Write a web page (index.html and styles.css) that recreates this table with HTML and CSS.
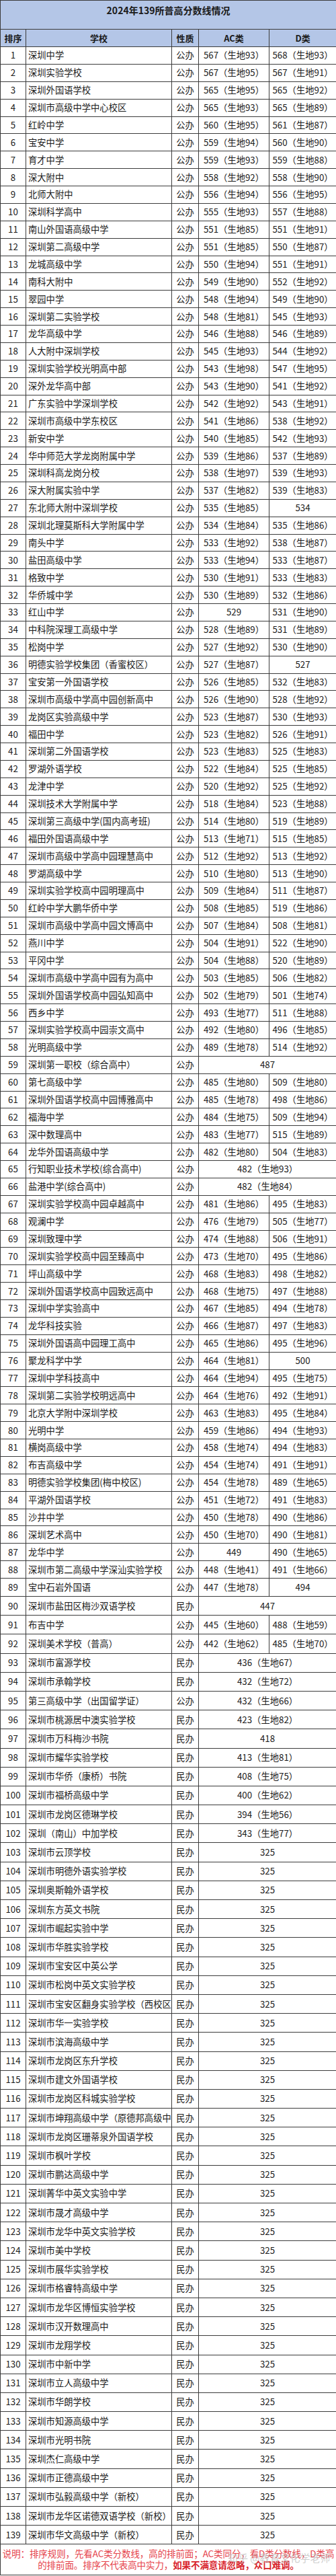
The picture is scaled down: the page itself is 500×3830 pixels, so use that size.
FILE: index.html
```html
<!DOCTYPE html>
<html lang="zh-CN">
<head>
<meta charset="utf-8">
<title>2024年139所普高分数线情况</title>
<link rel="stylesheet" href="styles.css">
</head>
<body>
<table class="scores">
<colgroup><col class="c-rank"><col class="c-name"><col class="c-type"><col class="c-ac"><col class="c-d"></colgroup>
<thead>
<tr class="title-row"><th colspan="5" class="title">2024年139所普高分数线情况</th></tr>
<tr class="head-row"><th>排序</th><th>学校</th><th>性质</th><th>AC类</th><th>D类</th></tr>
</thead>
<tbody class="short">
<tr><td>1</td><td class="name">深圳中学</td><td>公办</td><td>567（生地93）</td><td>568（生地93）</td></tr>
<tr><td>2</td><td class="name">深圳实验学校</td><td>公办</td><td>567（生地95）</td><td>567（生地91）</td></tr>
<tr><td>3</td><td class="name">深圳外国语学校</td><td>公办</td><td>565（生地95）</td><td>565（生地92）</td></tr>
<tr><td>4</td><td class="name">深圳市高级中学中心校区</td><td>公办</td><td>565（生地93）</td><td>565（生地89）</td></tr>
<tr><td>5</td><td class="name">红岭中学</td><td>公办</td><td>560（生地95）</td><td>561（生地87）</td></tr>
<tr><td>6</td><td class="name">宝安中学</td><td>公办</td><td>559（生地94）</td><td>560（生地90）</td></tr>
<tr><td>7</td><td class="name">育才中学</td><td>公办</td><td>559（生地93）</td><td>559（生地88）</td></tr>
<tr><td>8</td><td class="name">深大附中</td><td>公办</td><td>558（生地92）</td><td>558（生地90）</td></tr>
<tr><td>9</td><td class="name">北师大附中</td><td>公办</td><td>556（生地94）</td><td>556（生地95）</td></tr>
<tr><td>10</td><td class="name">深圳科学高中</td><td>公办</td><td>555（生地93）</td><td>557（生地88）</td></tr>
<tr><td>11</td><td class="name">南山外国语高级中学</td><td>公办</td><td>551（生地85）</td><td>551（生地91）</td></tr>
<tr><td>12</td><td class="name">深圳第二高级中学</td><td>公办</td><td>551（生地85）</td><td>550（生地87）</td></tr>
<tr><td>13</td><td class="name">龙城高级中学</td><td>公办</td><td>550（生地94）</td><td>551（生地91）</td></tr>
<tr><td>14</td><td class="name">南科大附中</td><td>公办</td><td>549（生地90）</td><td>552（生地92）</td></tr>
<tr><td>15</td><td class="name">翠园中学</td><td>公办</td><td>548（生地94）</td><td>549（生地90）</td></tr>
<tr><td>16</td><td class="name">深圳第二实验学校</td><td>公办</td><td>548（生地81）</td><td>545（生地93）</td></tr>
<tr><td>17</td><td class="name">龙华高级中学</td><td>公办</td><td>546（生地88）</td><td>546（生地89）</td></tr>
<tr><td>18</td><td class="name">人大附中深圳学校</td><td>公办</td><td>545（生地93）</td><td>544（生地92）</td></tr>
<tr><td>19</td><td class="name">深圳实验学校光明高中部</td><td>公办</td><td>543（生地98）</td><td>547（生地95）</td></tr>
<tr><td>20</td><td class="name">深外龙华高中部</td><td>公办</td><td>543（生地90）</td><td>541（生地92）</td></tr>
<tr><td>21</td><td class="name">广东实验中学深圳学校</td><td>公办</td><td>542（生地92）</td><td>543（生地91）</td></tr>
<tr><td>22</td><td class="name">深圳市高级中学东校区</td><td>公办</td><td>541（生地86）</td><td>538（生地92）</td></tr>
<tr><td>23</td><td class="name">新安中学</td><td>公办</td><td>540（生地85）</td><td>542（生地93）</td></tr>
<tr><td>24</td><td class="name">华中师范大学龙岗附属中学</td><td>公办</td><td>539（生地86）</td><td>537（生地89）</td></tr>
<tr><td>25</td><td class="name">深圳科高龙岗分校</td><td>公办</td><td>538（生地97）</td><td>539（生地93）</td></tr>
<tr><td>26</td><td class="name">深大附属实验中学</td><td>公办</td><td>537（生地82）</td><td>539（生地83）</td></tr>
<tr><td>27</td><td class="name">东北师大附中深圳学校</td><td>公办</td><td>535（生地85）</td><td>534</td></tr>
<tr><td>28</td><td class="name">深圳北理莫斯科大学附属中学</td><td>公办</td><td>534（生地84）</td><td>535（生地86）</td></tr>
<tr><td>29</td><td class="name">南头中学</td><td>公办</td><td>533（生地92）</td><td>538（生地87）</td></tr>
<tr><td>30</td><td class="name">盐田高级中学</td><td>公办</td><td>533（生地94）</td><td>533（生地87）</td></tr>
<tr><td>31</td><td class="name">格致中学</td><td>公办</td><td>530（生地91）</td><td>533（生地83）</td></tr>
<tr><td>32</td><td class="name">华侨城中学</td><td>公办</td><td>530（生地89）</td><td>532（生地86）</td></tr>
<tr><td>33</td><td class="name">红山中学</td><td>公办</td><td>529</td><td>531（生地90）</td></tr>
<tr><td>34</td><td class="name">中科院深理工高级中学</td><td>公办</td><td>528（生地89）</td><td>531（生地89）</td></tr>
<tr><td>35</td><td class="name">松岗中学</td><td>公办</td><td>527（生地92）</td><td>530（生地90）</td></tr>
<tr><td>36</td><td class="name">明德实验学校集团（香蜜校区）</td><td>公办</td><td>527（生地87）</td><td>527</td></tr>
<tr><td>37</td><td class="name">宝安第一外国语学校</td><td>公办</td><td>526（生地85）</td><td>532（生地83）</td></tr>
<tr><td>38</td><td class="name">深圳市高级中学高中园创新高中</td><td>公办</td><td>526（生地90）</td><td>528（生地92）</td></tr>
<tr><td>39</td><td class="name">龙岗区实验高级中学</td><td>公办</td><td>523（生地87）</td><td>530（生地93）</td></tr>
<tr><td>40</td><td class="name">福田中学</td><td>公办</td><td>523（生地82）</td><td>526（生地91）</td></tr>
<tr><td>41</td><td class="name">深圳第二外国语学校</td><td>公办</td><td>523（生地83）</td><td>525（生地83）</td></tr>
<tr><td>42</td><td class="name">罗湖外语学校</td><td>公办</td><td>522（生地84）</td><td>525（生地85）</td></tr>
<tr><td>43</td><td class="name">龙津中学</td><td>公办</td><td>520（生地92）</td><td>525（生地92）</td></tr>
<tr><td>44</td><td class="name">深圳技术大学附属中学</td><td>公办</td><td>518（生地84）</td><td>523（生地88）</td></tr>
<tr><td>45</td><td class="name">深圳第三高级中学(国内高考班)</td><td>公办</td><td>514（生地80）</td><td>519（生地89）</td></tr>
<tr><td>46</td><td class="name">福田外国语高级中学</td><td>公办</td><td>513（生地71）</td><td>515（生地85）</td></tr>
<tr><td>47</td><td class="name">深圳市高级中学高中园理慧高中</td><td>公办</td><td>512（生地92）</td><td>513（生地92）</td></tr>
<tr><td>48</td><td class="name">罗湖高级中学</td><td>公办</td><td>510（生地80）</td><td>513（生地90）</td></tr>
<tr><td>49</td><td class="name">深圳实验学校高中园明理高中</td><td>公办</td><td>509（生地84）</td><td>511（生地87）</td></tr>
<tr><td>50</td><td class="name">红岭中学大鹏华侨中学</td><td>公办</td><td>508（生地85）</td><td>519（生地86）</td></tr>
<tr><td>51</td><td class="name">深圳市高级中学高中园文博高中</td><td>公办</td><td>507（生地84）</td><td>508（生地81）</td></tr>
<tr><td>52</td><td class="name">燕川中学</td><td>公办</td><td>504（生地91）</td><td>522（生地90）</td></tr>
<tr><td>53</td><td class="name">平冈中学</td><td>公办</td><td>504（生地88）</td><td>520（生地89）</td></tr>
<tr><td>54</td><td class="name">深圳市高级中学高中园有为高中</td><td>公办</td><td>503（生地85）</td><td>506（生地82）</td></tr>
<tr><td>55</td><td class="name">深圳外国语学校高中园弘知高中</td><td>公办</td><td>502（生地79）</td><td>501（生地74）</td></tr>
<tr><td>56</td><td class="name">西乡中学</td><td>公办</td><td>493（生地77）</td><td>511（生地88）</td></tr>
<tr><td>57</td><td class="name">深圳实验学校高中园崇文高中</td><td>公办</td><td>492（生地80）</td><td>496（生地85）</td></tr>
<tr><td>58</td><td class="name">光明高级中学</td><td>公办</td><td>489（生地78）</td><td>514（生地92）</td></tr>
<tr><td>59</td><td class="name">深圳第一职校（综合高中）</td><td>公办</td><td colspan="2">487</td></tr>
<tr><td>60</td><td class="name">第七高级中学</td><td>公办</td><td>485（生地80）</td><td>509（生地80）</td></tr>
<tr><td>61</td><td class="name">深圳外国语学校高中园博雅高中</td><td>公办</td><td>485（生地78）</td><td>498（生地86）</td></tr>
<tr><td>62</td><td class="name">福海中学</td><td>公办</td><td>484（生地75）</td><td>509（生地94）</td></tr>
<tr><td>63</td><td class="name">深中数理高中</td><td>公办</td><td>483（生地77）</td><td>515（生地89）</td></tr>
<tr><td>64</td><td class="name">龙华外国语高级中学</td><td>公办</td><td>482（生地80）</td><td>504（生地83）</td></tr>
<tr><td>65</td><td class="name">行知职业技术学校(综合高中)</td><td>公办</td><td colspan="2">482（生地93）</td></tr>
<tr><td>66</td><td class="name">盐港中学(综合高中)</td><td>公办</td><td colspan="2">482（生地84）</td></tr>
<tr><td>67</td><td class="name">深圳实验学校高中园卓越高中</td><td>公办</td><td>481（生地86）</td><td>495（生地83）</td></tr>
<tr><td>68</td><td class="name">观澜中学</td><td>公办</td><td>476（生地79）</td><td>505（生地77）</td></tr>
<tr><td>69</td><td class="name">深圳致理中学</td><td>公办</td><td>474（生地88）</td><td>506（生地91）</td></tr>
<tr><td>70</td><td class="name">深圳实验学校高中园至臻高中</td><td>公办</td><td>473（生地70）</td><td>495（生地86）</td></tr>
<tr><td>71</td><td class="name">坪山高级中学</td><td>公办</td><td>468（生地83）</td><td>498（生地82）</td></tr>
<tr><td>72</td><td class="name">深圳外国语学校高中园致远高中</td><td>公办</td><td>468（生地75）</td><td>497（生地88）</td></tr>
<tr><td>73</td><td class="name">深圳中学实验高中</td><td>公办</td><td>467（生地85）</td><td>494（生地78）</td></tr>
<tr><td>74</td><td class="name">龙华科技实验</td><td>公办</td><td>466（生地87）</td><td>497（生地83）</td></tr>
<tr><td>75</td><td class="name">深圳外国语高中园理工高中</td><td>公办</td><td>465（生地86）</td><td>495（生地96）</td></tr>
<tr><td>76</td><td class="name">聚龙科学中学</td><td>公办</td><td>464（生地81）</td><td>500</td></tr>
<tr><td>77</td><td class="name">深圳中学科技高中</td><td>公办</td><td>464（生地94）</td><td>495（生地75）</td></tr>
<tr><td>78</td><td class="name">深圳第二实验学校明远高中</td><td>公办</td><td>464（生地76）</td><td>492（生地91）</td></tr>
<tr><td>79</td><td class="name">北京大学附中深圳学校</td><td>公办</td><td>463（生地83）</td><td>495（生地84）</td></tr>
<tr><td>80</td><td class="name">光明中学</td><td>公办</td><td>459（生地86）</td><td>494（生地93）</td></tr>
<tr><td>81</td><td class="name">横岗高级中学</td><td>公办</td><td>458（生地74）</td><td>494（生地83）</td></tr>
<tr><td>82</td><td class="name">布吉高级中学</td><td>公办</td><td>454（生地74）</td><td>491（生地91）</td></tr>
<tr><td>83</td><td class="name">明德实验学校集团(梅中校区)</td><td>公办</td><td>454（生地78）</td><td>489（生地65）</td></tr>
<tr><td>84</td><td class="name">平湖外国语学校</td><td>公办</td><td>451（生地72）</td><td>491（生地83）</td></tr>
<tr><td>85</td><td class="name">沙井中学</td><td>公办</td><td>450（生地78）</td><td>490（生地86）</td></tr>
<tr><td>86</td><td class="name">深圳艺术高中</td><td>公办</td><td>450（生地70）</td><td>490（生地81）</td></tr>
<tr><td>87</td><td class="name">龙华中学</td><td>公办</td><td>449</td><td>490（生地65）</td></tr>
<tr><td>88</td><td class="name">深圳市第二高级中学深汕实验学校</td><td>公办</td><td>448（生地41）</td><td>491（生地66）</td></tr>
<tr class="r89"><td>89</td><td class="name">宝中石岩外国语</td><td>公办</td><td>447（生地78）</td><td>494</td></tr>
</tbody>
<tbody class="tall">
<tr><td>90</td><td class="name">深圳市盐田区梅沙双语学校</td><td>民办</td><td colspan="2">447</td></tr>
<tr><td>91</td><td class="name">布吉中学</td><td>公办</td><td>445（生地60）</td><td>488（生地59）</td></tr>
<tr><td>92</td><td class="name">深圳美术学校（普高）</td><td>公办</td><td>442（生地62）</td><td>485（生地70）</td></tr>
<tr><td>93</td><td class="name">深圳市富源学校</td><td>民办</td><td colspan="2">436（生地67）</td></tr>
<tr><td>94</td><td class="name">深圳市承翰学校</td><td>民办</td><td colspan="2">432（生地72）</td></tr>
<tr><td>95</td><td class="name">第三高级中学（出国留学证）</td><td>公办</td><td colspan="2">432（生地66）</td></tr>
<tr><td>96</td><td class="name">深圳市桃源居中澳实验学校</td><td>民办</td><td colspan="2">423（生地82）</td></tr>
<tr><td>97</td><td class="name">深圳市万科梅沙书院</td><td>民办</td><td colspan="2">418</td></tr>
<tr><td>98</td><td class="name">深圳市耀华实验学校</td><td>民办</td><td colspan="2">413（生地81）</td></tr>
<tr><td>99</td><td class="name">深圳市华侨（康桥）书院</td><td>民办</td><td colspan="2">408（生地75）</td></tr>
<tr><td>100</td><td class="name">深圳市福桥高级中学</td><td>民办</td><td colspan="2">400（生地62）</td></tr>
<tr><td>101</td><td class="name">深圳市龙岗区德琳学校</td><td>民办</td><td colspan="2">394（生地56）</td></tr>
<tr><td>102</td><td class="name">深圳（南山）中加学校</td><td>民办</td><td colspan="2">343（生地77）</td></tr>
<tr><td>103</td><td class="name">深圳市云顶学校</td><td>民办</td><td colspan="2">325</td></tr>
<tr><td>104</td><td class="name">深圳市明德外语实验学校</td><td>民办</td><td colspan="2">325</td></tr>
<tr><td>105</td><td class="name">深圳奥斯翰外语学校</td><td>民办</td><td colspan="2">325</td></tr>
<tr><td>106</td><td class="name">深圳东方英文书院</td><td>民办</td><td colspan="2">325</td></tr>
<tr><td>107</td><td class="name">深圳市崛起实验中学</td><td>民办</td><td colspan="2">325</td></tr>
<tr><td>108</td><td class="name">深圳市华胜实验学校</td><td>民办</td><td colspan="2">325</td></tr>
<tr><td>109</td><td class="name">深圳市宝安区中英公学</td><td>民办</td><td colspan="2">325</td></tr>
<tr><td>110</td><td class="name">深圳市松岗中英文实验学校</td><td>民办</td><td colspan="2">325</td></tr>
<tr><td>111</td><td class="name">深圳市宝安区翻身实验学校（西校区）</td><td>民办</td><td colspan="2">325</td></tr>
<tr><td>112</td><td class="name">深圳市华一实验学校</td><td>民办</td><td colspan="2">325</td></tr>
<tr><td>113</td><td class="name">深圳市滨海高级中学</td><td>民办</td><td colspan="2">325</td></tr>
<tr><td>114</td><td class="name">深圳市龙岗区东升学校</td><td>民办</td><td colspan="2">325</td></tr>
<tr><td>115</td><td class="name">深圳市建文外国语学校</td><td>民办</td><td colspan="2">325</td></tr>
<tr><td>116</td><td class="name">深圳市龙岗区科城实验学校</td><td>民办</td><td colspan="2">325</td></tr>
<tr><td>117</td><td class="name">深圳市坤翔高级中学（原德邦高级中学）</td><td>民办</td><td colspan="2">325</td></tr>
<tr><td>118</td><td class="name">深圳市龙岗区珊蒂泉外国语学校</td><td>民办</td><td colspan="2">325</td></tr>
<tr><td>119</td><td class="name">深圳市枫叶学校</td><td>民办</td><td colspan="2">325</td></tr>
<tr><td>120</td><td class="name">深圳市鹏达高级中学</td><td>民办</td><td colspan="2">325</td></tr>
<tr><td>121</td><td class="name">深圳菁华中英文实验中学</td><td>民办</td><td colspan="2">325</td></tr>
<tr><td>122</td><td class="name">深圳市晟才高级中学</td><td>民办</td><td colspan="2">325</td></tr>
<tr><td>123</td><td class="name">深圳市龙华中英文实验学校</td><td>民办</td><td colspan="2">325</td></tr>
<tr><td>124</td><td class="name">深圳市美中学校</td><td>民办</td><td colspan="2">325</td></tr>
<tr><td>125</td><td class="name">深圳市展华实验学校</td><td>民办</td><td colspan="2">325</td></tr>
<tr><td>126</td><td class="name">深圳市格睿特高级中学</td><td>民办</td><td colspan="2">325</td></tr>
<tr><td>127</td><td class="name">深圳市龙华区博恒实验学校</td><td>民办</td><td colspan="2">325</td></tr>
<tr><td>128</td><td class="name">深圳市汉开数理高中</td><td>民办</td><td colspan="2">325</td></tr>
<tr><td>129</td><td class="name">深圳市龙翔学校</td><td>民办</td><td colspan="2">325</td></tr>
<tr><td>130</td><td class="name">深圳市中新中学</td><td>民办</td><td colspan="2">325</td></tr>
<tr><td>131</td><td class="name">深圳市立人高级中学</td><td>民办</td><td colspan="2">325</td></tr>
<tr><td>132</td><td class="name">深圳市华朗学校</td><td>民办</td><td colspan="2">325</td></tr>
<tr><td>133</td><td class="name">深圳市知源高级中学</td><td>民办</td><td colspan="2">325</td></tr>
<tr><td>134</td><td class="name">深圳市光明书院</td><td>民办</td><td colspan="2">325</td></tr>
<tr><td>135</td><td class="name">深圳杰仁高级中学</td><td>民办</td><td colspan="2">325</td></tr>
<tr><td>136</td><td class="name">深圳市正德高级中学</td><td>民办</td><td colspan="2">325</td></tr>
<tr><td>137</td><td class="name">深圳市弘毅高级中学（新校）</td><td>民办</td><td colspan="2">325</td></tr>
<tr><td>138</td><td class="name">深圳市龙华区诺德双语学校（新校）</td><td>民办</td><td colspan="2">325</td></tr>
<tr><td>139</td><td class="name">深圳市华文高级中学（新校）</td><td>民办</td><td colspan="2">325</td></tr>
</tbody>
<tfoot>
<tr class="note-row"><td colspan="5" class="note"><div class="note-wrap"><p class="note-text">说明：排序规则，先看AC类分数线，高的排前面；AC类同分，看D类分数线，D类高的排前面。排序不代表高中实力，<strong>如果不满意请忽略，众口难调。</strong></p><span class="watermark">知乎 @教育文化学老师</span></div></td></tr>
</tfoot>
</table>
</body>
</html>
```
FILE: styles.css
```css
html, body {
  margin: 0;
  padding: 0;
  background: #ffffff;
}

body {
  font-family: "Noto Sans CJK SC", "Noto Sans", sans-serif;
  color: #1a1a1a;
}

.scores {
  width: 500px;
  table-layout: fixed;
  border-collapse: collapse;
  font-size: 13.3px;
}

.c-rank { width: 38px; }
.c-name { width: 217px; }
.c-type { width: 40px; }
.c-ac { width: 105px; }
.c-d { width: 100px; }

.scores th,
.scores td {
  border: 1px solid #3c3c3c;
  padding: 0;
  text-align: center;
  vertical-align: middle;
  white-space: nowrap;
  overflow: hidden;
  line-height: 16px;
}

.title-row { height: 43px; }

.scores .title {
  background: #b4c6e7;
  font-size: 14px;
  font-weight: 700;
  vertical-align: top;
  padding-top: 6px;
  color: #1a1a1a;
}

.head-row { height: 26px; }

.head-row th {
  background: #b4c6e7;
  font-weight: 700;
  font-size: 13px;
  color: #1a1a1a;
}

.short tr { height: 25.875px; }
.short tr.r89 { height: 27px; }
.tall tr { height: 28.2px; }

.scores td.name {
  text-align: left;
  padding-left: 3px;
  text-overflow: clip;
}

.note-row { height: 46px; }

.scores td.note {
  vertical-align: top;
  white-space: normal;
  padding: 5px 2px 0;
}

.note-wrap {
  position: relative;
}

.note-text {
  margin: 0;
  color: #e6434b;
  font-size: 13.5px;
  line-height: 17px;
  text-align: center;
  letter-spacing: -0.1px;
}

.note-text strong {
  color: #d8222a;
  font-weight: 700;
}

.watermark {
  position: absolute;
  left: 336px;
  top: 6px;
  font-size: 15px;
  line-height: 18px;
  color: rgba(190, 190, 190, 0.75);
  white-space: nowrap;
}
```
